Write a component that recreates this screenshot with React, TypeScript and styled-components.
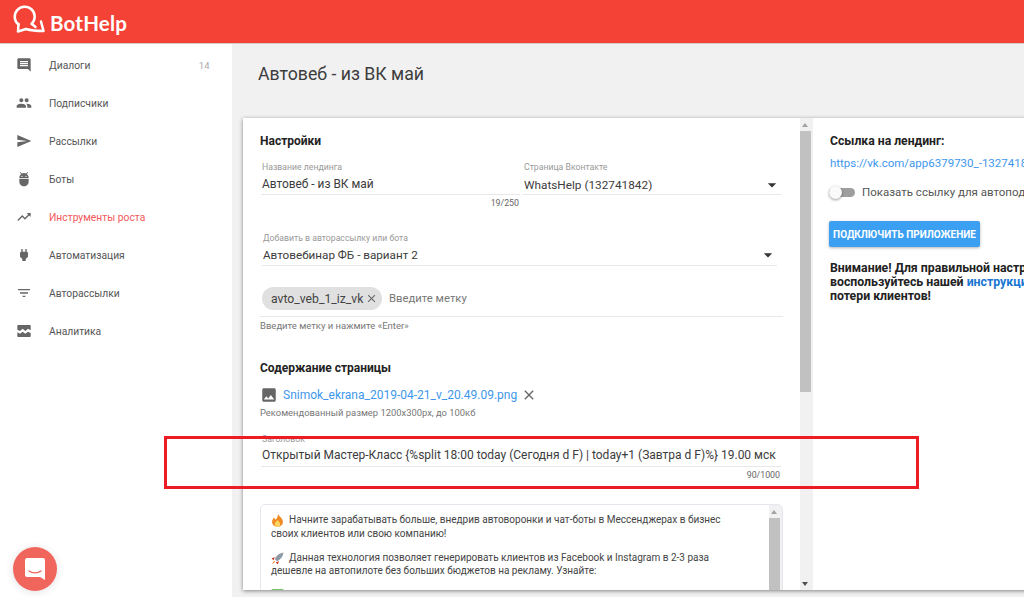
import { createGlobalStyle, styled } from 'styled-components';
import type { ReactNode } from 'react';
import { MdAdb, MdArrowDropDown, MdClose, MdFilterList, MdImage, MdInsertComment, MdPeople, MdPower, MdSend, MdTrendingUp } from 'react-icons/md';

const GlobalStyle = createGlobalStyle`
    html, body {
        margin: 0;
        height: 100%;
        overflow: hidden;
        font-family: Roboto, "Liberation Sans", sans-serif;
        color: #333;
    }
    * {
        box-sizing: border-box;
    }
`;

const Page = styled.div`
    width: 1024px;
    height: 597px;
    display: flex;
    flex-direction: column;
    overflow: hidden;
    position: relative;
    background-color: #f1f1f1;
`;

const Header = styled.header`
    height: 44px;
    flex-shrink: 0;
    background-color: #f44336;
    border-bottom: 1px solid #d5c9c7;
    display: flex;
    align-items: center;
    padding-left: 13px;
    gap: 5px;
`;

const LogoMark = styled.svg`
    margin-bottom: 6px;
    flex-shrink: 0;
`;

const LogoText = styled.span`
    font-family: Lato, sans-serif;
    font-weight: 700;
    font-size: 20.5px;
    padding-top: 2px;
    color: white;
    letter-spacing: 0.2px;
`;

const Body = styled.div`
    flex: 1;
    display: flex;
    min-height: 0;
`;

const Sidebar = styled.nav`
    width: 232px;
    flex-shrink: 0;
    background-color: white;
    padding-top: 2px;
`;

const NavItem = styled.div<{ $active?: boolean }>`
    height: 38px;
    display: flex;
    align-items: center;
    padding: 0 22px 0 16px;
    font-size: 10.3px;
    color: ${(p) => (p.$active ? '#f4575a' : '#555')};
    svg {
        width: 16px;
        height: 16px;
        color: #666;
        flex-shrink: 0;
    }
`;

const NavLabel = styled.span`
    margin-left: 17px;
    flex: 1;
`;

const NavCount = styled.span`
    font-size: 9.5px;
    color: #aaa;
    letter-spacing: 0.3px;
`;

const Main = styled.main`
    flex: 1;
    min-width: 0;
    display: flex;
    flex-direction: column;
    padding: 0 0 7px 11px;
`;

const Title = styled.h1`
    margin: 0;
    height: 74px;
    padding: 19px 0 0 15px;
    font-size: 17.7px;
    line-height: 22px;
    font-weight: 400;
    color: #3c3c3c;
`;

const Panel = styled.div`
    flex: 1;
    min-height: 0;
    width: 900px;
    display: flex;
    background-color: white;
    box-shadow: 0 1px 4px rgba(0, 0, 0, 0.45);
`;

const Form = styled.div`
    width: 557px;
    flex-shrink: 0;
    overflow: hidden;
    padding: 15px 17px 0;
`;

const Track = styled.div`
    width: 13px;
    flex-shrink: 0;
    background-color: #f1f1f1;
`;

const Thumb = styled.div<{ $height: number }>`
    width: 11px;
    height: ${(p) => p.$height}px;
    margin-top: 13px;
    background-color: #c1c1c1;
`;

const Arrow = styled.div<{ $down?: boolean }>`
    position: absolute;
    left: 2px;
    top: ${(p) => (p.$down ? 'auto' : '5px')};
    bottom: ${(p) => (p.$down ? '4px' : 'auto')};
    width: 0;
    height: 0;
    border-left: 3.5px solid transparent;
    border-right: 3.5px solid transparent;
    border-bottom: ${(p) => (p.$down ? 'none' : '4px solid #a3a3a3')};
    border-top: ${(p) => (p.$down ? '4px solid #505050' : 'none')};
`;

const TrackBox = styled.div`
    position: relative;
    display: flex;
    flex-shrink: 0;
`;

const Heading = styled.h2<{ $top?: number }>`
    margin: ${(p) => p.$top ?? 0}px 0 0;
    font-size: 12px;
    line-height: 16px;
    font-weight: 700;
    color: #222;
`;

const FieldRow = styled.div`
    display: flex;
    gap: 3px;
    margin-top: 12px;
`;

const Field = styled.div<{ $inset?: number; $top?: number; $width?: number }>`
    width: ${(p) => (p.$width ? `${p.$width}px` : 'auto')};
    margin-left: ${(p) => p.$inset ?? 1}px;
    margin-top: ${(p) => p.$top ?? 0}px;
`;

const FieldLabel = styled.div`
    font-size: 8.7px;
    line-height: 12px;
    color: #999;
    padding-left: 1px;
    white-space: nowrap;
`;

const FieldValue = styled.div<{ $size?: number; $drop?: number; $lift?: number }>`
    height: 19px;
    margin-top: 3px;
    padding: ${(p) => p.$drop ?? 0}px 1px ${(p) => p.$lift ?? 2}px;
    display: flex;
    align-items: center;
    justify-content: space-between;
    font-size: ${(p) => p.$size ?? 12}px;
    line-height: 16px;
    color: #3c3c3c;
    white-space: nowrap;
    border-bottom: 1px solid #e8e8e8;
    svg {
        width: 20px;
        height: 20px;
        color: #333;
        margin-right: -2px;
    }
`;

const Counter = styled.div`
    font-size: 8.8px;
    line-height: 16px;
    padding-right: 1px;
    color: #666;
    text-align: right;
`;

const TagRow = styled.div`
    margin-top: 21px;
    height: 30px;
    display: flex;
    gap: 7px;
    padding-left: 2px;
    border-bottom: 1px solid #e8e8e8;
    font-size: 12px;
    color: #777;
`;

const Chip = styled.div`
    height: 23px;
    width: 120px;
    display: flex;
    align-items: center;
    justify-content: space-between;
    padding: 0 4px 0 9px;
    border-radius: 12px;
    background-color: #e0e0e0;
    font-size: 12.2px;
    color: #444;
    svg {
        width: 13px;
        height: 13px;
        color: #666;
    }
`;

const Placeholder = styled.span`
    font-size: 11.3px;
    line-height: 23px;
`;

const Hint = styled.div<{ $top: number; $size?: number }>`
    margin-top: ${(p) => p.$top}px;
    font-size: ${(p) => p.$size ?? 9.5}px;
    line-height: 12px;
    color: #777;
`;

const FileRow = styled.div`
    margin-top: 9px;
    display: flex;
    align-items: center;
    height: 20px;
    svg:first-child {
        width: 18px;
        height: 18px;
        color: #666;
    }
    svg:last-child {
        width: 16px;
        height: 16px;
        color: #666;
        margin-left: 4px;
    }
`;

const FileLink = styled.a`
    margin-left: 5px;
    font-size: 12px;
    color: #3e97ed;
`;

const Editor = styled.div`
    margin-top: 21px;
    height: 100px;
    display: flex;
    border: 1px solid #e4e8ee;
    border-radius: 5px 5px 0 0;
    overflow: hidden;
`;

const EditorText = styled.div`
    flex: 1;
    padding: 8px 25px 0 10px;
    font-size: 10px;
    line-height: 13.5px;
    color: #444;
`;

const Paragraph = styled.p`
    margin: 0 0 10.5px;
`;

const Emoji = styled.svg`
    width: 13px;
    height: 13px;
    vertical-align: -2px;
    margin: -2px 5px -2px 0;
`;

const Side = styled.aside`
    flex: 1;
    min-width: 0;
    padding: 15px 17px 0;
    color: #333;
    white-space: nowrap;
`;

const SideHeading = styled.div`
    font-size: 12.2px;
    line-height: 16px;
    font-weight: 700;
    color: #222;
`;

const SideLink = styled.a`
    display: block;
    margin-top: 6px;
    font-size: 11.5px;
    line-height: 16px;
    color: #3e97ed;
`;

const SwitchRow = styled.div`
    display: flex;
    align-items: center;
    gap: 7px;
    margin-top: 14px;
    font-size: 11.5px;
    color: #555;
`;

const Switch = styled.div`
    width: 26px;
    height: 9px;
    margin-left: -1px;
    border-radius: 5px;
    background-color: #9e9e9e;
    position: relative;
    &::before {
        content: '';
        position: absolute;
        left: 0;
        top: -2px;
        width: 13px;
        height: 13px;
        border-radius: 50%;
        background-color: #fafafa;
        box-shadow: 0 1px 3px rgba(0, 0, 0, 0.4);
    }
`;

const ConnectButton = styled.button`
    display: block;
    margin: 22px 0 0 -1px;
    height: 26px;
    width: 151px;
    padding: 0;
    border: 0;
    border-radius: 2px;
    background-color: #3ba0f2;
    color: white;
    font-family: inherit;
    font-size: 10px;
    font-weight: 700;
    box-shadow: 0 1px 3px rgba(0, 0, 0, 0.3);
`;

const Warning = styled.div`
    margin-top: 14px;
    font-size: 12.3px;
    line-height: 14px;
    font-weight: 700;
    color: #222;
    a {
        color: #1976d2;
    }
`;

const Callout = styled.div`
    position: absolute;
    left: 164px;
    top: 436px;
    width: 755px;
    height: 53px;
    border: 3px solid #ed1c24;
`;

const ChatBubble = styled.div`
    position: absolute;
    left: 13px;
    top: 547px;
    width: 44px;
    height: 44px;
    border-radius: 50%;
    background-color: #f1665c;
    box-shadow: 0 1px 8px rgba(0, 0, 0, 0.12);
    display: flex;
    align-items: center;
    justify-content: center;
`;

const navItems: { label: string; icon: ReactNode; count?: string; active?: boolean }[] = [
    { label: 'Диалоги', icon: <MdInsertComment />, count: '14' },
    { label: 'Подписчики', icon: <MdPeople /> },
    { label: 'Рассылки', icon: <MdSend /> },
    { label: 'Боты', icon: <MdAdb /> },
    { label: 'Инструменты роста', icon: <MdTrendingUp />, active: true },
    { label: 'Автоматизация', icon: <MdPower /> },
    { label: 'Авторассылки', icon: <MdFilterList /> },
    {
        label: 'Аналитика',
        icon: (
            <svg viewBox="0 0 24 24" fill="currentColor">
                <path d="M3 3h18a1 1 0 0 1 1 1v7l-4-2.500-4 3.500-4-3.500-4 3.500-4-2V4a1 1 0 0 1 1-1Zm-1 11 4 2 4-3 4 3 4-3 4 2v5a1 1 0 0 1-1 1H3a1 1 0 0 1-1-1v-6Z" />
            </svg>
        ),
    },
];

const Logo = () => (
    <LogoMark width="32" height="30" viewBox="0 0 32 30" fill="none" stroke="white" strokeWidth="2.500" strokeLinecap="round" strokeLinejoin="round">
        <path d="M5.500 20.500A10 10 0 1 1 18.500 20" />
        <path d="M5.500 20 5 27.500l8-2.500" />
        <path d="M13 25c5 1.500 11 2 17.500 2L28 17.500" />
        <path d="M19 20l3.500 3" />
    </LogoMark>
);

export default function App() {
    return (
        <Page>
            <GlobalStyle />
            <Header>
                <Logo />
                <LogoText>BotHelp</LogoText>
            </Header>
            <Body>
                <Sidebar>
                    {navItems.map((item) => (
                        <NavItem key={item.label} $active={item.active}>
                            {item.icon}
                            <NavLabel>{item.label}</NavLabel>
                            {item.count && <NavCount>{item.count}</NavCount>}
                        </NavItem>
                    ))}
                </Sidebar>
                <Main>
                    <Title>Автовеб - из ВК май</Title>
                    <Panel>
                        <Form>
                            <Heading>Настройки</Heading>
                            <FieldRow>
                                <Field $width={259}>
                                    <FieldLabel>Название лендинга</FieldLabel>
                                    <FieldValue $size={11.9}>Автовеб - из ВК май</FieldValue>
                                    <Counter>19/250</Counter>
                                </Field>
                                <Field $width={258} $inset={0}>
                                    <FieldLabel>Страница Вконтакте</FieldLabel>
                                    <FieldValue $size={11.8} $drop={2}>
                                        WhatsHelp (132741842)
                                        <MdArrowDropDown />
                                    </FieldValue>
                                </Field>
                            </FieldRow>
                            <Field $inset={2} $top={21} $width={515}>
                                <FieldLabel>Добавить в авторассылку или бота</FieldLabel>
                                <FieldValue $size={11.7}>
                                    Автовебинар ФБ - вариант 2
                                    <MdArrowDropDown />
                                </FieldValue>
                            </Field>
                            <TagRow>
                                <Chip>
                                    avto_veb_1_iz_vk
                                    <MdClose />
                                </Chip>
                                <Placeholder>Введите метку</Placeholder>
                            </TagRow>
                            <Hint $top={3}>Введите метку и нажмите «Enter»</Hint>
                            <Heading $top={28}>Содержание страницы</Heading>
                            <FileRow>
                                <MdImage />
                                <FileLink>Snimok_ekrana_2019-04-21_v_20.49.09.png</FileLink>
                                <MdClose />
                            </FileRow>
                            <Hint $top={2} $size={9.4}>Рекомендованный размер 1200x300px, до 100кб</Hint>
                            <Field $top={14} $width={520}>
                                <FieldLabel>Заголовок</FieldLabel>
                                <FieldValue $lift={4}>Открытый Мастер-Класс {'{%split 18:00 today (Сегодня d F) | today+1 (Завтра d F)%}'} 19.00 мск</FieldValue>
                                <Counter>90/1000</Counter>
                            </Field>
                            <Editor>
                                <EditorText>
                                    <Paragraph>
                                        <Emoji viewBox="0 0 12 12">
                                            <path d="M6.500 0c.5 2 4.500 3.500 4.500 7.500a5 4.500 0 0 1-10 0C1 5.500 2 4 3 3c0 1 .5 2 1.500 2C5.500 4 6.500 2 6.500 0Z" fill="#f08a24" />
                                            <path d="M6 5.500c1 1 2.500 2.500 2.500 4a2.500 2.500 0 0 1-5 0c0-1.500 1.500-3 2.500-4Z" fill="#fcd462" />
                                        </Emoji>
                                        Начните зарабатывать больше, внедрив автоворонки и чат-боты в Мессенджерах в бизнес своих клиентов или свою компанию!
                                    </Paragraph>
                                    <Paragraph>
                                        <Emoji viewBox="0 0 12 12">
                                            <path d="M11.500.5C8 1 5 3 3.500 6.500l2 2C9 7 11 4 11.500.5Z" fill="#8d99a3" />
                                            <path d="M3.500 4.500 .5 6l2 1.500ZM7.500 8.500 6 11.500 4.500 9.500Z" fill="#d8352a" />
                                            <path d="M3 8 .5 11.500 4 9Z" fill="#f08a24" />
                                        </Emoji>
                                        Данная технология позволяет генерировать клиентов из Facebook и Instagram в 2-3 раза дешевле на автопилоте без больших бюджетов на рекламу. Узнайте:
                                    </Paragraph>
                                    <Emoji viewBox="0 0 12 12">
                                        <rect width="12" height="12" rx="2" fill="#7ac36a" />
                                    </Emoji>
                                </EditorText>
                                <TrackBox>
                                    <Track>
                                        <Thumb $height={90} />
                                    </Track>
                                    <Arrow />
                                </TrackBox>
                            </Editor>
                        </Form>
                        <TrackBox>
                            <Track>
                                <Thumb $height={261} />
                            </Track>
                            <Arrow />
                            <Arrow $down />
                        </TrackBox>
                        <Side>
                            <SideHeading>Ссылка на лендинг:</SideHeading>
                            <SideLink>https://vk.com/app6379730_-132741842#</SideLink>
                            <SwitchRow>
                                <Switch />
                                Показать ссылку для автоподписки
                            </SwitchRow>
                            <ConnectButton>ПОДКЛЮЧИТЬ ПРИЛОЖЕНИЕ</ConnectButton>
                            <Warning>
                                Внимание! Для правильной настройки
                                <br />
                                воспользуйтесь нашей <a>инструкцией</a>
                                <br />
                                потери клиентов!
                            </Warning>
                        </Side>
                    </Panel>
                </Main>
            </Body>
            <Callout />
            <ChatBubble>
                <svg width="22" height="24" viewBox="0 0 22 24">
                    <path d="M3 1h16a2 2 0 0 1 2 2v20l-5-3H3a2 2 0 0 1-2-2V3a2 2 0 0 1 2-2Z" fill="white" />
                    <path d="M5 14c3 2.500 9 2.500 12 0" stroke="#f1665c" strokeWidth="1.300" fill="none" strokeLinecap="round" />
                </svg>
            </ChatBubble>
        </Page>
    );
}
